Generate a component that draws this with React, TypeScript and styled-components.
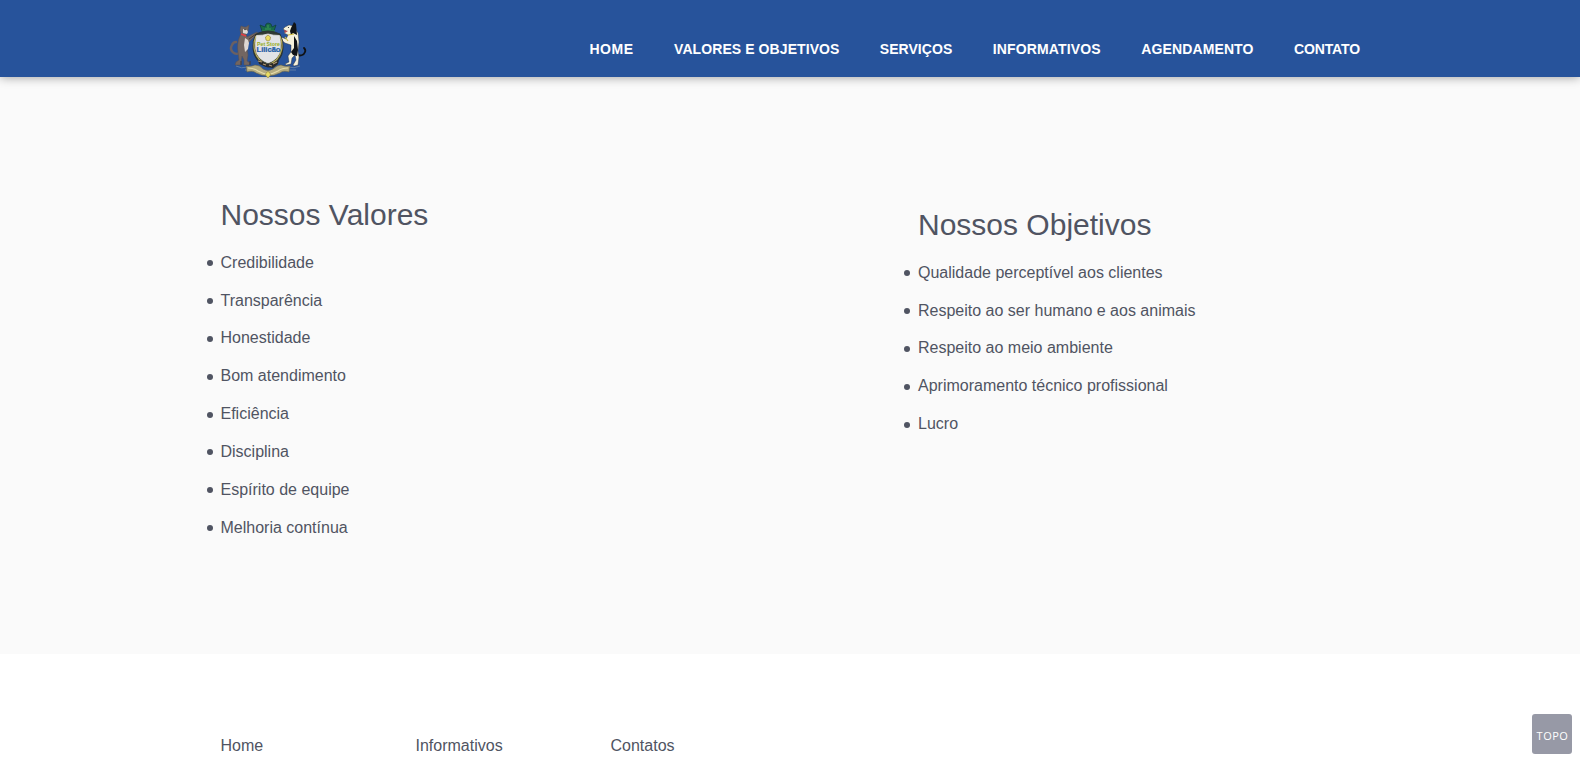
import React from "react";
import styled, { createGlobalStyle } from "styled-components";

const GlobalStyle = createGlobalStyle`
  * { box-sizing: border-box; }
  body {
    margin: 0;
    background: #fff;
    color: #505462;
    font-family: "Liberation Sans", Arial, sans-serif;
    font-size: 16px;
    line-height: 1.42857;
    overflow: hidden;
  }
`;

const Page = styled.div`
  height: 764px;
  overflow: hidden;
`;

const Container = styled.div`
  width: 1170px;
  margin: 0 auto;
  padding: 0 15px 0 15.5px;
`;

const Header = styled.header`
  position: relative;
  height: 77px;
  background: #27539b;
  box-shadow: 0 0 10px rgba(0, 0, 0, 0.4);
`;

const HeaderInner = styled(Container)`
  display: flex;
  justify-content: space-between;
  align-items: flex-start;
`;

const Brand = styled.a`
  display: block;
  height: 60px;
  margin: 20px 0 0 7.5px;
`;

const Nav = styled.nav`
  display: flex;
  gap: 40.4px;
  padding: 39px 0 0;
`;

const NavLink = styled.a<{ $tracking: number }>`
  color: #fff;
  font-size: 14px;
  font-weight: 700;
  line-height: 20px;
  letter-spacing: ${(p) => p.$tracking}px;
  text-transform: uppercase;
`;

const Section = styled.section`
  height: 577px;
  padding-top: 121px;
  background: #fafafa;
`;

const Columns = styled(Container)`
  display: grid;
  grid-template-columns: 697.5px 1fr;
  align-items: start;
`;

const Column = styled.div<{ $drop?: number }>`
  padding-top: ${(p) => p.$drop ?? 0}px;
`;

const Title = styled.h2`
  margin: 0 0 20.74px;
  font-size: 30px;
  font-weight: 400;
  line-height: 33px;
`;

const List = styled.ul`
  margin: 0;
  padding: 0;
  list-style: none;
`;

const Item = styled.li`
  display: flex;
  align-items: center;
  margin-bottom: 15px;

  &::before {
    content: "";
    width: 6px;
    height: 6px;
    margin: 0 8px 0 -14px;
    border-radius: 50%;
    background: currentColor;
  }
`;

const Footer = styled.footer`
  padding-top: 81px;
`;

const FooterLinks = styled(Container)`
  display: grid;
  grid-template-columns: repeat(6, 195px);
`;

const FooterLink = styled.a`
  color: inherit;
`;

const TopButton = styled.a`
  position: fixed;
  right: 8px;
  bottom: 10px;
  width: 40px;
  height: 40px;
  padding-left: 1px;
  border-radius: 3px;
  background: #9799a6;
  color: #fff;
  font: 400 11px/44px "Open Sans", sans-serif;
  letter-spacing: 0.5px;
  text-align: center;
`;

const Crest = () => (
  <svg width="80" height="60" viewBox="0 0 80 60" aria-label="Pet Store Lilicão">
    {/* ground flourishes */}
    <path d="M8 46q5 3 12 1M72 46q-6 3-12 1M17 50h5m37 0h9" fill="none" stroke="#6d88a8" strokeWidth=".8" />
    {/* ribbon */}
    <path d="M18 46q5 1 9-1 5 0 8 4 5 3 10 0 4-4 8-4 4 2 9 1l-1 6q-6-2-9 1-6 3-12 3t-12-3q-3-3-9-1z" fill="#b5ac80" stroke="#655f46" strokeWidth=".6" />
    <path d="M20 48q6 0 10 3 5 3 10 3t10-3q4-3 10-3" fill="none" stroke="#e4dba8" strokeWidth="1.2" />
    {/* cat */}
    <path d="M12 33C6 36 1 30 4 25q1-3 4-3" fill="none" stroke="#6a6062" strokeWidth="2.4" strokeLinecap="round" />
    <path d="m13 6 3 1h2l3-2-1 6-2 3 1 3 6-3 4-2 1 2-5 4-5 5-1 5 1 7-1 6 3 2-1 2h-5v-5l-2-4-1 7v2h-6l1-3 3-2-1-8c-1-7 0-13 3-18l-1-4z" fill="#736661" stroke="#5b504f" strokeWidth=".5" />
    <path d="m17 18 3 2 1 3-1 6-3 3-1-7zM15 9l4 1 1 2-1 2-4-1z" fill="#ded7d2" />
    <path d="m21 19 7-5m-6 27v4m-9-4v4" stroke="#433a3a" strokeWidth="1" />
    <path d="m13 14 5 2" stroke="#e33b42" strokeWidth="1.5" />
    <circle cx="17" cy="9.5" r=".7" fill="#222b31" />
    {/* dog */}
    <path d="M68 34c4 3 8 1 9-2q1-2-1-4" fill="none" stroke="#101215" strokeWidth="1.8" strokeLinecap="round" />
    <path d="m65 6-4-1-4 2-2 2 3 2-2 2 4 2-2 4-5-2-1 2 5 4 6 2v7l-3 4 1 6-4 2 1 1 5-1 1-6 3-3 1 5-3 5 1 1 4-1 1-8-1-6 1-9-1-9z" fill="#f5f1dc" stroke="#232629" strokeWidth=".4" />
    <path d="m63 8 3-6 2 2 1 11-4-2-2 2-1-4zM66 16l3 5 1 9-1 6-4-1-2-3 3-4z" fill="#111417" />
    <path d="m56 10 4 1-3 2z" fill="#bc4a4a" />
    <circle cx="60.5" cy="7.5" r=".6" fill="#222b31" />
    <path d="m60 15 6-1M57 17l3 4" stroke="#d0bd3c" strokeWidth="1.1" />
    {/* crown */}
    <path d="m32 5 5 2 1-3 2-1 3 1 1 3 4-2-2 6H34z" fill="#196a4b" stroke="#12403e" strokeWidth=".8" />
    <path d="M34 11h13M40 5v3m-3 1h6" stroke="#3e9a50" strokeWidth="1.1" />
    {/* shield */}
    <path d="M28 14q6-3 12-3t12 3q4 7 3 15-1 13-15 18-14-5-15-18-1-8 3-15z" fill="#303934" stroke="#27302d" strokeWidth=".8" />
    <path d="M28 16q-3 7-1.500 14Q29 41 40 45q11-4 13.500-15Q55 23 52 16" fill="none" stroke="#b8ac5b" strokeWidth="1.2" />
    <path d="M28.500 15.500q6 0 11.500-1.500 5.500 1.500 11.500 1.500 1.500 7 .8 13.500-1 10-12.300 14-11-4-12.300-14-.7-6 .8-13.500z" fill="#e2e3e6" stroke="#f0f0ed" strokeWidth=".7" />
    <path d="m37.500 17 2.500-2 2.500 2-.5 3-2 1-2-1z" fill="#eddd61" stroke="#8a7b31" strokeWidth=".6" />
    <text x="40.500" y="26" textAnchor="middle" textLength="23" lengthAdjust="spacingAndGlyphs" fontFamily="Liberation Sans, sans-serif" fontSize="5.3" fontWeight="700" fill="#94ab1d">Pet Store</text>
    <text x="40.500" y="32" textAnchor="middle" textLength="24" lengthAdjust="spacingAndGlyphs" fontFamily="Liberation Sans, sans-serif" fontSize="6.3" fontWeight="700" fill="#1d5ca5" stroke="#1d5ca5" strokeWidth=".2">Lilicão</text>
    {/* clasped paws */}
    <path d="m30 40 4 1 5 3 6-1 6-3-1 4-5 4-7-1-7-3z" fill="#292a2a" />
    <path d="m30 41 4 1m1 2 3 1m3 0 3 1m1-2 4-2" stroke="#b69b72" strokeWidth="1.1" />
    <path d="m38 53 2-1.500L42 53l.5 2-2.500 3-2.500-3z" fill="#e8dd65" stroke="#807238" strokeWidth=".5" />
  </svg>
);

const navItems = [
  { label: "Home", tracking: 0.55 },
  { label: "Valores e Objetivos", tracking: 0.08 },
  { label: "Serviços", tracking: 0.04 },
  { label: "Informativos", tracking: 0.16 },
  { label: "Agendamento", tracking: 0.12 },
  { label: "Contato", tracking: -0.12 },
];

const valores = [
  "Credibilidade",
  "Transparência",
  "Honestidade",
  "Bom atendimento",
  "Eficiência",
  "Disciplina",
  "Espírito de equipe",
  "Melhoria contínua",
];

const objetivos = [
  "Qualidade perceptível aos clientes",
  "Respeito ao ser humano e aos animais",
  "Respeito ao meio ambiente",
  "Aprimoramento técnico profissional",
  "Lucro",
];

const TopicList = ({ title, items, drop }: { title: string; items: string[]; drop?: number }) => (
  <Column $drop={drop}>
    <Title>{title}</Title>
    <List>
      {items.map((item) => (
        <Item key={item}>{item}</Item>
      ))}
    </List>
  </Column>
);

export default function App() {
  return (
    <Page>
      <GlobalStyle />
      <Header>
        <HeaderInner>
          <Brand>
            <Crest />
          </Brand>
          <Nav>
            {navItems.map((item) => (
              <NavLink key={item.label} $tracking={item.tracking}>
                {item.label}
              </NavLink>
            ))}
          </Nav>
        </HeaderInner>
      </Header>
      <Section>
        <Columns>
          <TopicList title="Nossos Valores" items={valores} />
          <TopicList title="Nossos Objetivos" items={objetivos} drop={10} />
        </Columns>
      </Section>
      <Footer>
        <FooterLinks>
          <FooterLink>Home</FooterLink>
          <FooterLink>Informativos</FooterLink>
          <FooterLink>Contatos</FooterLink>
        </FooterLinks>
      </Footer>
      <TopButton>TOPO</TopButton>
    </Page>
  );
}
